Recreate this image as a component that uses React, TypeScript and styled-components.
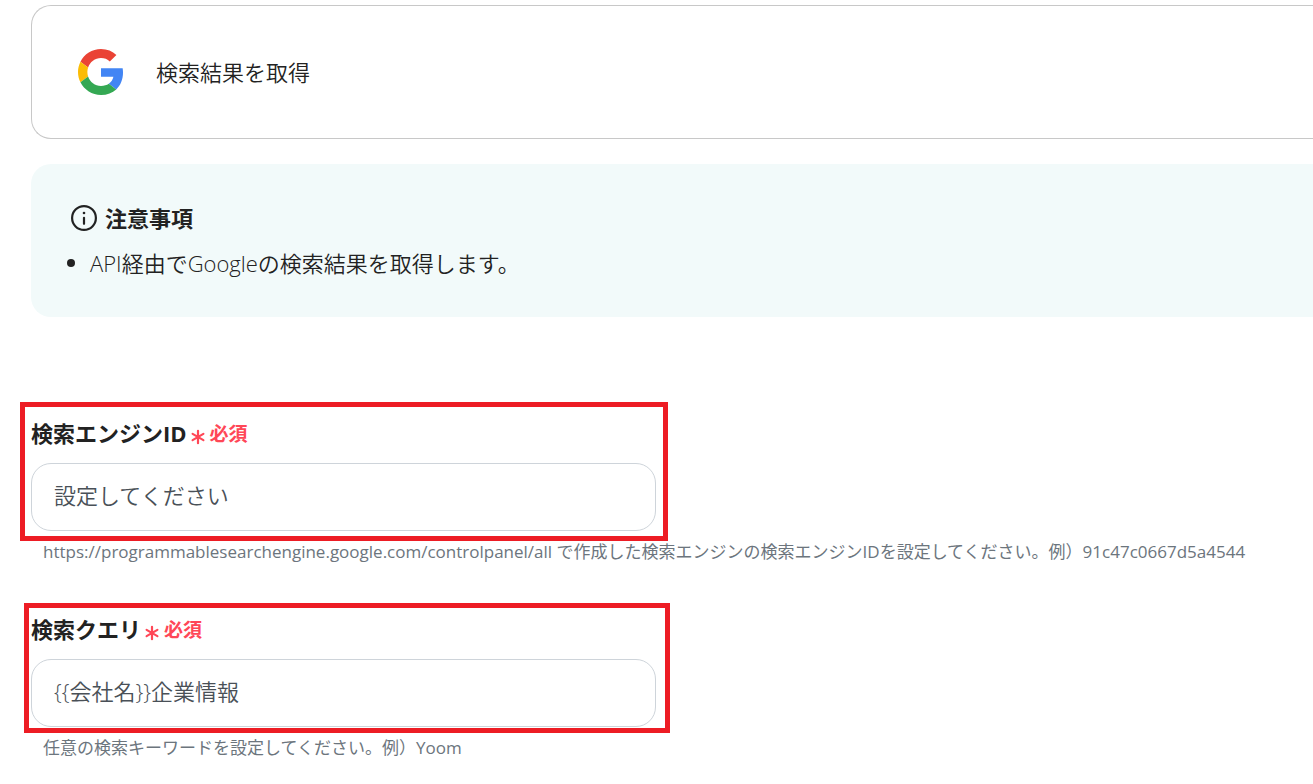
import React from "react";
import styled, { createGlobalStyle } from "styled-components";

const GlobalStyle = createGlobalStyle`
  *, *::before, *::after { box-sizing: border-box; }
  body {
    margin: 0;
    background: #fff;
    color: #222;
    font-family: "Open Sans", "Noto Sans CJK JP", sans-serif;
    font-size: 22px;
    font-weight: 350;
    line-height: 32px;
    overflow-x: hidden;
  }
`;

const Page = styled.main`
  display: flex;
  flex-direction: column;
  padding: 5px 0 20px 31px;
`;

const ActionCard = styled.section`
  display: flex;
  align-items: center;
  gap: 32px;
  height: 134px;
  padding: 0 46px;
  border: 1px solid #c8c8c8;
  border-right: 0;
  border-radius: 20px 0 0 20px;
`;

const ActionTitle = styled.h1`
  margin: 0;
  font-size: 22px;
  font-weight: 350;
`;

const Notice = styled.section`
  display: flex;
  flex-direction: column;
  gap: 13px;
  margin-top: 25px;
  padding: 38px 36px;
  border-radius: 20px 0 0 20px;
  background: #f2fafa;
`;

const NoticeTitle = styled.h2`
  display: flex;
  align-items: center;
  gap: 8px;
  margin: 0;
  padding-left: 4px;
  font-size: 22px;
  font-weight: 700;
`;

const NoticeList = styled.ul`
  margin: 0;
  padding: 0;
  list-style: none;
`;

const NoticeItem = styled.li`
  display: flex;
  align-items: center;
  gap: 15px;

  &::before {
    content: "";
    width: 8px;
    height: 8px;
    border-radius: 50%;
    background: #222;
  }
`;

const Form = styled.form`
  display: flex;
  flex-direction: column;
  gap: 48px;
  margin-top: 100px;
`;

const Field = styled.div`
  display: flex;
  flex-direction: column;
`;

const FieldBody = styled.div`
  position: relative;
  width: 100%;
  max-width: 625px;
`;

const Highlight = styled.span<{ $inset: string }>`
  position: absolute;
  inset: ${(p) => p.$inset};
  border: 5px solid #ed1c24;
  pointer-events: none;
`;

const Label = styled.label`
  display: flex;
  align-items: center;
  gap: 4px;
  margin-bottom: 14px;
  font-weight: 700;
`;

const Required = styled.span`
  display: flex;
  align-items: center;
  gap: 5px;
  padding-top: 2px;
  color: #ff4757;
  font-size: 19px;
  line-height: 30px;

  svg { margin-top: 6px; }
`;

const TextInput = styled.input`
  display: block;
  width: 100%;
  height: 68px;
  padding: 0 22px 6px;
  border: 1px solid #ced4da;
  border-radius: 20px;
  background: #fff;
  color: #495057;
  font: inherit;
`;

const Help = styled.p`
  margin: 8px 0 0;
  padding-left: 12px;
  color: #6c757d;
  font-size: 17px;
  font-weight: 400;
  line-height: 26px;
`;

function GoogleLogo() {
  return (
    <svg width="46" height="46" viewBox="0 0 48 48" aria-hidden="true">
      <path fill="#EA4335" d="M24 9.5c3.54 0 6.71 1.22 9.21 3.6l6.85-6.85C35.9 2.38 30.47 0 24 0 14.62 0 6.51 5.38 2.56 13.22l7.98 6.19C12.43 13.72 17.74 9.5 24 9.5z" />
      <path fill="#4285F4" d="M46.98 24.55c0-1.57-.15-3.09-.38-4.55H24v9.02h12.94c-.58 2.96-2.26 5.48-4.78 7.18l7.73 6c4.51-4.18 7.09-10.36 7.09-17.65z" />
      <path fill="#FBBC05" d="M10.53 28.59c-.48-1.45-.76-2.99-.76-4.59s.27-3.14.76-4.59l-7.98-6.19C.92 16.46 0 20.12 0 24c0 3.88.92 7.54 2.56 10.78l7.97-6.19z" />
      <path fill="#34A853" d="M24 48c6.48 0 11.93-2.13 15.89-5.81l-7.73-6c-2.15 1.45-4.92 2.3-8.16 2.3-6.26 0-11.57-4.22-13.47-9.91l-7.98 6.19C6.51 42.62 14.62 48 24 48z" />
    </svg>
  );
}

function InfoIcon() {
  return (
    <svg width="26" height="26" viewBox="0 0 26 26" fill="none" aria-hidden="true">
      <circle cx="13" cy="13" r="11.9" stroke="#222" strokeWidth="2.2" />
      <circle cx="13" cy="8" r="1.3" fill="#222" />
      <path d="M13 12.8v6" stroke="#222" strokeWidth="2.2" strokeLinecap="round" />
    </svg>
  );
}

function AsteriskIcon() {
  return (
    <svg width="14" height="16" viewBox="0 0 14 16" fill="none" aria-hidden="true">
      <path
        d="M7 1.8v12.4M1.6 4.9l10.8 6.2M12.4 4.9L1.6 11.1"
        stroke="#ff4757"
        strokeWidth="2.2"
        strokeLinecap="round"
      />
    </svg>
  );
}

interface TextFieldProps {
  id: string;
  label: string;
  value: string;
  help: string;
  highlight: string;
}

function TextField({ id, label, value, help, highlight }: TextFieldProps) {
  return (
    <Field>
      <FieldBody>
        <Label htmlFor={id}>
          {label}
          <Required>
            <AsteriskIcon />
            必須
          </Required>
        </Label>
        <TextInput id={id} type="text" defaultValue={value} aria-describedby={`${id}-help`} />
        <Highlight $inset={highlight} />
      </FieldBody>
      <Help id={`${id}-help`}>{help}</Help>
    </Field>
  );
}

export default function App() {
  return (
    <>
      <GlobalStyle />
      <Page>
        <ActionCard>
          <GoogleLogo />
          <ActionTitle>検索結果を取得</ActionTitle>
        </ActionCard>
        <Notice>
          <NoticeTitle>
            <InfoIcon />
            注意事項
          </NoticeTitle>
          <NoticeList>
            <NoticeItem>API経由でGoogleの検索結果を取得します。</NoticeItem>
          </NoticeList>
        </Notice>
        <Form>
          <TextField
            id="engine-id"
            label="検索エンジンID"
            value="設定してください"
            help="https://programmablesearchengine.google.com/controlpanel/all で作成した検索エンジンの検索エンジンIDを設定してください。例）91c47c0667d5a4544"
            highlight="-15px -12px -10px -11px"
          />
          <TextField
            id="query"
            label="検索クエリ"
            value="{{会社名}}企業情報"
            help="任意の検索キーワードを設定してください。例）Yoom"
            highlight="-10px -14px -6px -7px"
          />
        </Form>
      </Page>
    </>
  );
}
